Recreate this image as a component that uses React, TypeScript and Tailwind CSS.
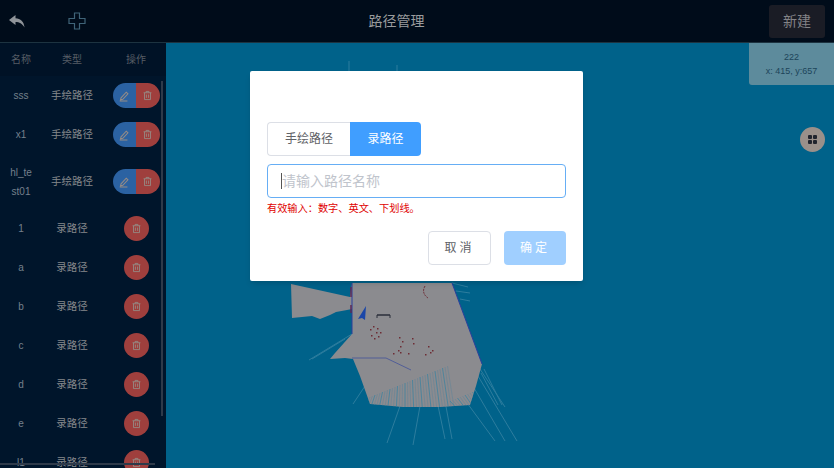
import React from 'react';

const FONT = '"Liberation Sans", "Noto Sans CJK SC", sans-serif';

type Route = { name: string; type: string };

const routes: Route[] = [
  { name: 'sss', type: '手绘路径' },
  { name: 'x1', type: '手绘路径' },
  { name: 'hl_test01', type: '手绘路径' },
  { name: '1', type: '录路径' },
  { name: 'a', type: '录路径' },
  { name: 'b', type: '录路径' },
  { name: 'c', type: '录路径' },
  { name: 'd', type: '录路径' },
  { name: 'e', type: '录路径' },
  { name: 'l1', type: '录路径' },
];

const MAP_OUTLINE =
  'M291 283 350 296 352 282H452L482 363 476 385 470 404 440 406 403 406 370 403 360 375 353 358 345 357 330 358 335 352 352 333V308L347 309 336 311 330 314 320 318 312 315 292 317Z';

// long thin scan rays leaving the map
const rays = [
  [365, 385, 353, 403], [400, 405, 387, 442], [420, 405, 413, 444], [437, 400, 445, 438],
  [445, 400, 452, 438], [462, 395, 495, 440], [470, 380, 505, 440], [475, 370, 517, 440],
  [478, 365, 505, 406], [484, 368, 502, 404], [481, 372, 498, 404], [352, 333, 309, 359],
  [345, 338, 312, 358], [452, 282, 468, 286], [456, 290, 470, 292], [460, 298, 470, 300],
];

const noise = Array.from({ length: 46 }, (_, i) => {
  const x = 360 + i * 2.500;
  const h = 8 + ((i * 37) % 36);
  const lean = ((i - 18) / 30) * 12;
  return { x, y: 408 - h, x2: x + lean, y2: 408, strong: i % 3 === 0 };
});

const redDots = [
  [370, 328], [373, 325], [377, 327], [380, 331], [378, 335], [374, 337], [371, 334], [376, 331],
  [399, 336], [402, 340], [400, 345], [398, 349], [393, 352], [400, 351], [408, 352], [412, 337],
  [413, 342], [428, 345], [430, 351], [425, 353], [432, 349],
];

const TrashIcon = () => (
  <svg viewBox="0 0 14 14" className="h-[11px] w-[11px]" fill="none" stroke="currentColor" strokeWidth="1.100">
    <path d="M2 3.500h10M5.200 3.500V1.800h3.600v1.700M3.200 3.500v8.700h7.600V3.500M5.600 5.800v4.200M8.400 5.800v4.200" />
  </svg>
);

const EditIcon = () => (
  <svg viewBox="0 0 14 14" className="h-[12px] w-[12px]" fill="none" stroke="currentColor" strokeWidth="1.200">
    <path d="M3.500 9.200 9.600 2.600l2 1.800-6 6.500-2.600.6zM2 12.800h9" />
  </svg>
);

const RouteRow = ({ route }: { route: Route }) => (
  <div className={`flex items-center ${route.name.length > 5 ? 'h-[55px]' : 'h-[39px]'}`}>
    <div className="w-[42px] shrink-0 break-all px-[9px] text-center text-[10px] leading-[19px] text-[#75808c]">
      {route.name}
    </div>
    <div className="w-[60px] shrink-0 text-center text-[10.5px] text-[#85888b]">{route.type}</div>
    <div className="flex w-[68px] shrink-0 justify-center text-[#968c86]">
      {route.type === '手绘路径' ? (
        <div className="flex h-[25px] w-[47px] overflow-hidden rounded-full">
          <div className="flex flex-1 items-center justify-center bg-[#2b62a2]"><EditIcon /></div>
          <div className="flex flex-1 items-center justify-center bg-[#9f3f3d]"><TrashIcon /></div>
        </div>
      ) : (
        <div className="flex h-[25px] w-[25px] items-center justify-center rounded-full bg-[#9f3f3d]"><TrashIcon /></div>
      )}
    </div>
  </div>
);

const MapLayer = () => (
  <svg className="absolute left-0 top-0 h-[426px] w-[668px]" viewBox="166 42 668 426">
    <defs>
      <clipPath id="map-clip">
        <path d={MAP_OUTLINE} />
      </clipPath>
    </defs>
    <path d="M349 60v11M397 64v7" stroke="#2d7d9e" strokeWidth="1" />
    {rays.map((r, i) => (
      <line key={i} x1={r[0]} y1={r[1]} x2={r[2]} y2={r[3]} stroke="#2d7d9e" strokeWidth="1" />
    ))}
    <path d={MAP_OUTLINE} fill="#8b8b8f" />
    <g clipPath="url(#map-clip)">
      {noise.map((n, i) => (
        <line key={i} x1={n.x} y1={n.y} x2={n.x2} y2={n.y2} stroke={n.strong ? '#3f83a0' : '#6f8795'} strokeWidth="0.800" />
      ))}
    </g>
    <path d="M352 282v51M452 282l30 81" stroke="#2b3f9c" strokeWidth="1" fill="none" />
    <path d="M352 357h34l25 12" stroke="#2b3f9c" strokeWidth="1" fill="none" opacity="0.6" />
    <path d="M351 286v10M351 304v8" stroke="#5c2a58" strokeWidth="1.500" fill="none" />
    <path d="M425 285q-4 7 3 12" stroke="#6e2a34" strokeWidth="1" fill="none" strokeDasharray="2 1" />
    <path d="M377 317v-3h13v3M377 314h13" stroke="#2a2f3a" strokeWidth="1" fill="none" />
    {redDots.map((d, i) => (
      <rect key={i} x={d[0]} y={d[1]} width="1.500" height="1.500" fill="#6e2c34" />
    ))}
    <path d="M366 305 358 318 362 317 365 319Z" fill="#1a46a8" />
  </svg>
);

export default function App() {
  return (
    <div className="relative flex h-[468px] w-[834px] flex-col overflow-hidden bg-[#00628a]" style={{ fontFamily: FONT }}>
      <header className="flex h-[43px] shrink-0 items-center border-b border-[#1d3340] bg-[#000c1a]">
        <div className="flex w-[120px] items-center">
          <svg viewBox="0 0 16 13" className="ml-[9px] h-[13px] w-[16px]" fill="#8f9499">
            <path d="M6.500 0 0 5l6.500 5V7c4 0 6.500 1.500 9 5.500C15 6.500 11.500 3.500 6.500 3.200Z" />
          </svg>
          <svg viewBox="0 0 18 18" className="ml-[43px] h-[18px] w-[18px]" fill="none" stroke="#3f6478" strokeWidth="1.200">
            <path d="M6.500 1h5v5.500H17v5h-5.500V17h-5v-5.500H1v-5h5.500z" />
          </svg>
        </div>
        <div className="w-[553px] text-center text-[14px] text-[#9a9c9e]">路径管理</div>
        <button className="ml-auto mr-[9px] h-[33px] w-[56px] rounded-[3px] bg-[#1a1c25] text-[14px] text-[#838387]">新建</button>
      </header>

      <div className="flex min-h-0 flex-1">
        <aside className="relative w-[166px] shrink-0 overflow-hidden bg-[#00152b]">
          <div className="flex h-[33px] items-center bg-[#001226] text-[10px] text-[#565d65]">
            <div className="w-[42px] shrink-0 text-center">名称</div>
            <div className="w-[60px] shrink-0 text-center">类型</div>
            <div className="w-[68px] shrink-0 text-center">操作</div>
          </div>
          {routes.map((route) => (
            <RouteRow key={route.name} route={route} />
          ))}
          <div className="absolute left-[161px] top-[38px] h-[335px] w-[2px] bg-[#2e3a4a]" />
          <div className="absolute bottom-[3px] left-0 h-[2px] w-[155px] bg-[#2e3a4a]" />
        </aside>

        <main className="relative min-w-0 flex-1">
          <MapLayer />
          <div className="absolute right-0 top-0 flex h-[42px] w-[85px] flex-col items-center justify-center rounded-bl-[3px] bg-[#5d8b9c] text-[9px] leading-[14px] text-[#1c4459]">
            <span>222</span>
            <span>x: 415, y:657</span>
          </div>
          <div className="absolute right-[9px] top-[84px] flex h-[25px] w-[25px] items-center justify-center rounded-full bg-[#9a908a]">
            <div className="grid grid-cols-2 gap-[1px]">
              <span className="h-[4px] w-[4px] rounded-[1px] bg-[#20242e]" />
              <span className="h-[4px] w-[4px] rounded-[1px] bg-[#20242e]" />
              <span className="h-[4px] w-[4px] rounded-[1px] bg-[#20242e]" />
              <span className="h-[4px] w-[4px] rounded-[1px] bg-[#20242e]" />
            </div>
          </div>
        </main>
      </div>

      {/* modal, the page behind it is already painted in its dimmed colours */}
      <div className="absolute inset-0">
        <div className="ml-[250px] mt-[71px] flex h-[210px] w-[333px] flex-col rounded-[2px] bg-white px-[17px] pt-[51px] shadow-md">
          <div className="flex h-[34px] text-[12px]">
            <div className="flex w-[83px] items-center justify-center rounded-l-[4px] border border-r-0 border-[#dcdfe6] text-[#606266]">手绘路径</div>
            <div className="flex w-[71px] items-center justify-center rounded-r-[4px] bg-[#409eff] text-white">录路径</div>
          </div>
          <div className="mt-[8px] flex h-[34px] w-[299px] items-center rounded-[4px] border border-[#66aef5] pl-[13px] text-[14px] text-[#c0c4cc]">
            <span className="h-[16px] w-px bg-[#555]" />
            <span>请输入路径名称</span>
          </div>
          <div className="mt-[3px] text-[10.2px] leading-[16px] text-[#e00000]">有效输入：数字、英文、下划线。</div>
          <div className="mt-[14px] flex w-[299px] justify-end gap-[13px] text-[12px]">
            <button className="h-[34px] w-[63px] rounded-[4px] border border-[#dcdfe6] tracking-[3px] text-[#606266]">取消</button>
            <button className="h-[34px] w-[62px] rounded-[4px] bg-[#a0cfff] tracking-[3px] text-white">确定</button>
          </div>
        </div>
      </div>
    </div>
  );
}
